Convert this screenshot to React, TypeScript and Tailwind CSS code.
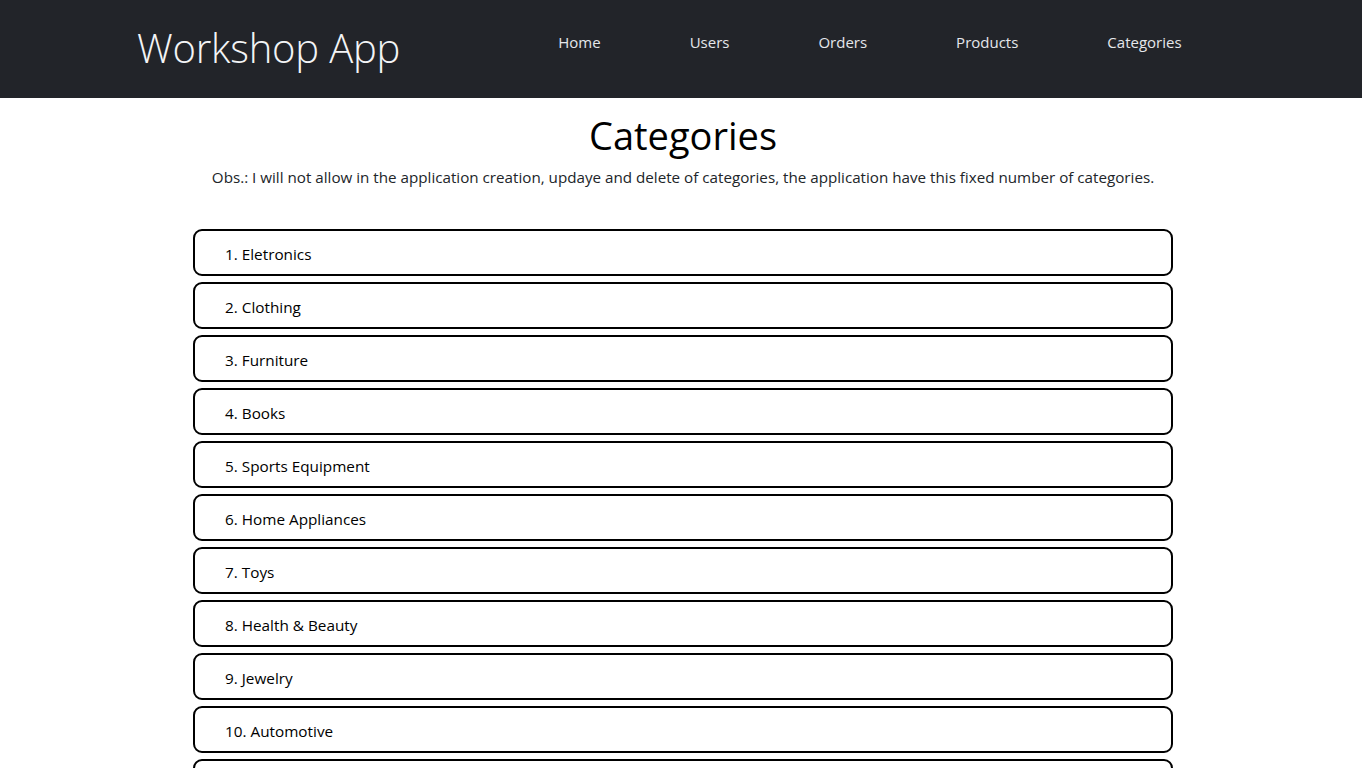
import React from "react";

const navLinks = ["Home", "Users", "Orders", "Products", "Categories"];

const categories = [
    "Eletronics",
    "Clothing",
    "Furniture",
    "Books",
    "Sports Equipment",
    "Home Appliances",
    "Toys",
    "Health & Beauty",
    "Jewelry",
    "Automotive",
    "Groceries",
    "Office Supplies",
];

const Header: React.FC = () => (
    <header className="h-[98px] bg-[#222429] flex items-center">
        <div className="w-full flex items-center pl-[137px]">
            <a className="text-[40px] leading-none text-[#f3f4f6] font-light tracking-[-0.2px] -mt-[2px]">
                Workshop App
            </a>
            <nav className="flex ml-[158px] -mt-[14px]">
                {navLinks.map((l, i) => (
                    <a
                        key={l}
                        className={`text-[15px] text-[#e5e7eb] ${i === 0 ? "" : "ml-[89px]"}`}
                    >
                        {l}
                    </a>
                ))}
            </nav>
        </div>
    </header>
);

export default function App() {
    return (
        <div className="min-h-screen bg-white font-['Open_Sans',sans-serif] text-black">
            <Header />
            <main className="flex flex-col items-center pl-[4px]">
                <h1 className="mt-[14px] text-[38px] leading-[46px] font-normal">Categories</h1>
                <p className="mt-[9px] text-[15.2px] leading-[20px] text-[#212529]">
                    Obs.: I will not allow in the application creation, updaye and delete of categories, the application have this fixed number of categories.
                </p>
                <ul className="mt-[42px] w-[980px] flex flex-col gap-[6px] pb-10">
                    {categories.map((c, i) => (
                        <li
                            key={c}
                            className="h-[47px] border-2 border-black rounded-[9px] flex items-center pl-[30px] pt-[3px] text-[15.3px]"
                        >
                            {i + 1}. {c}
                        </li>
                    ))}
                </ul>
            </main>
        </div>
    );
}
